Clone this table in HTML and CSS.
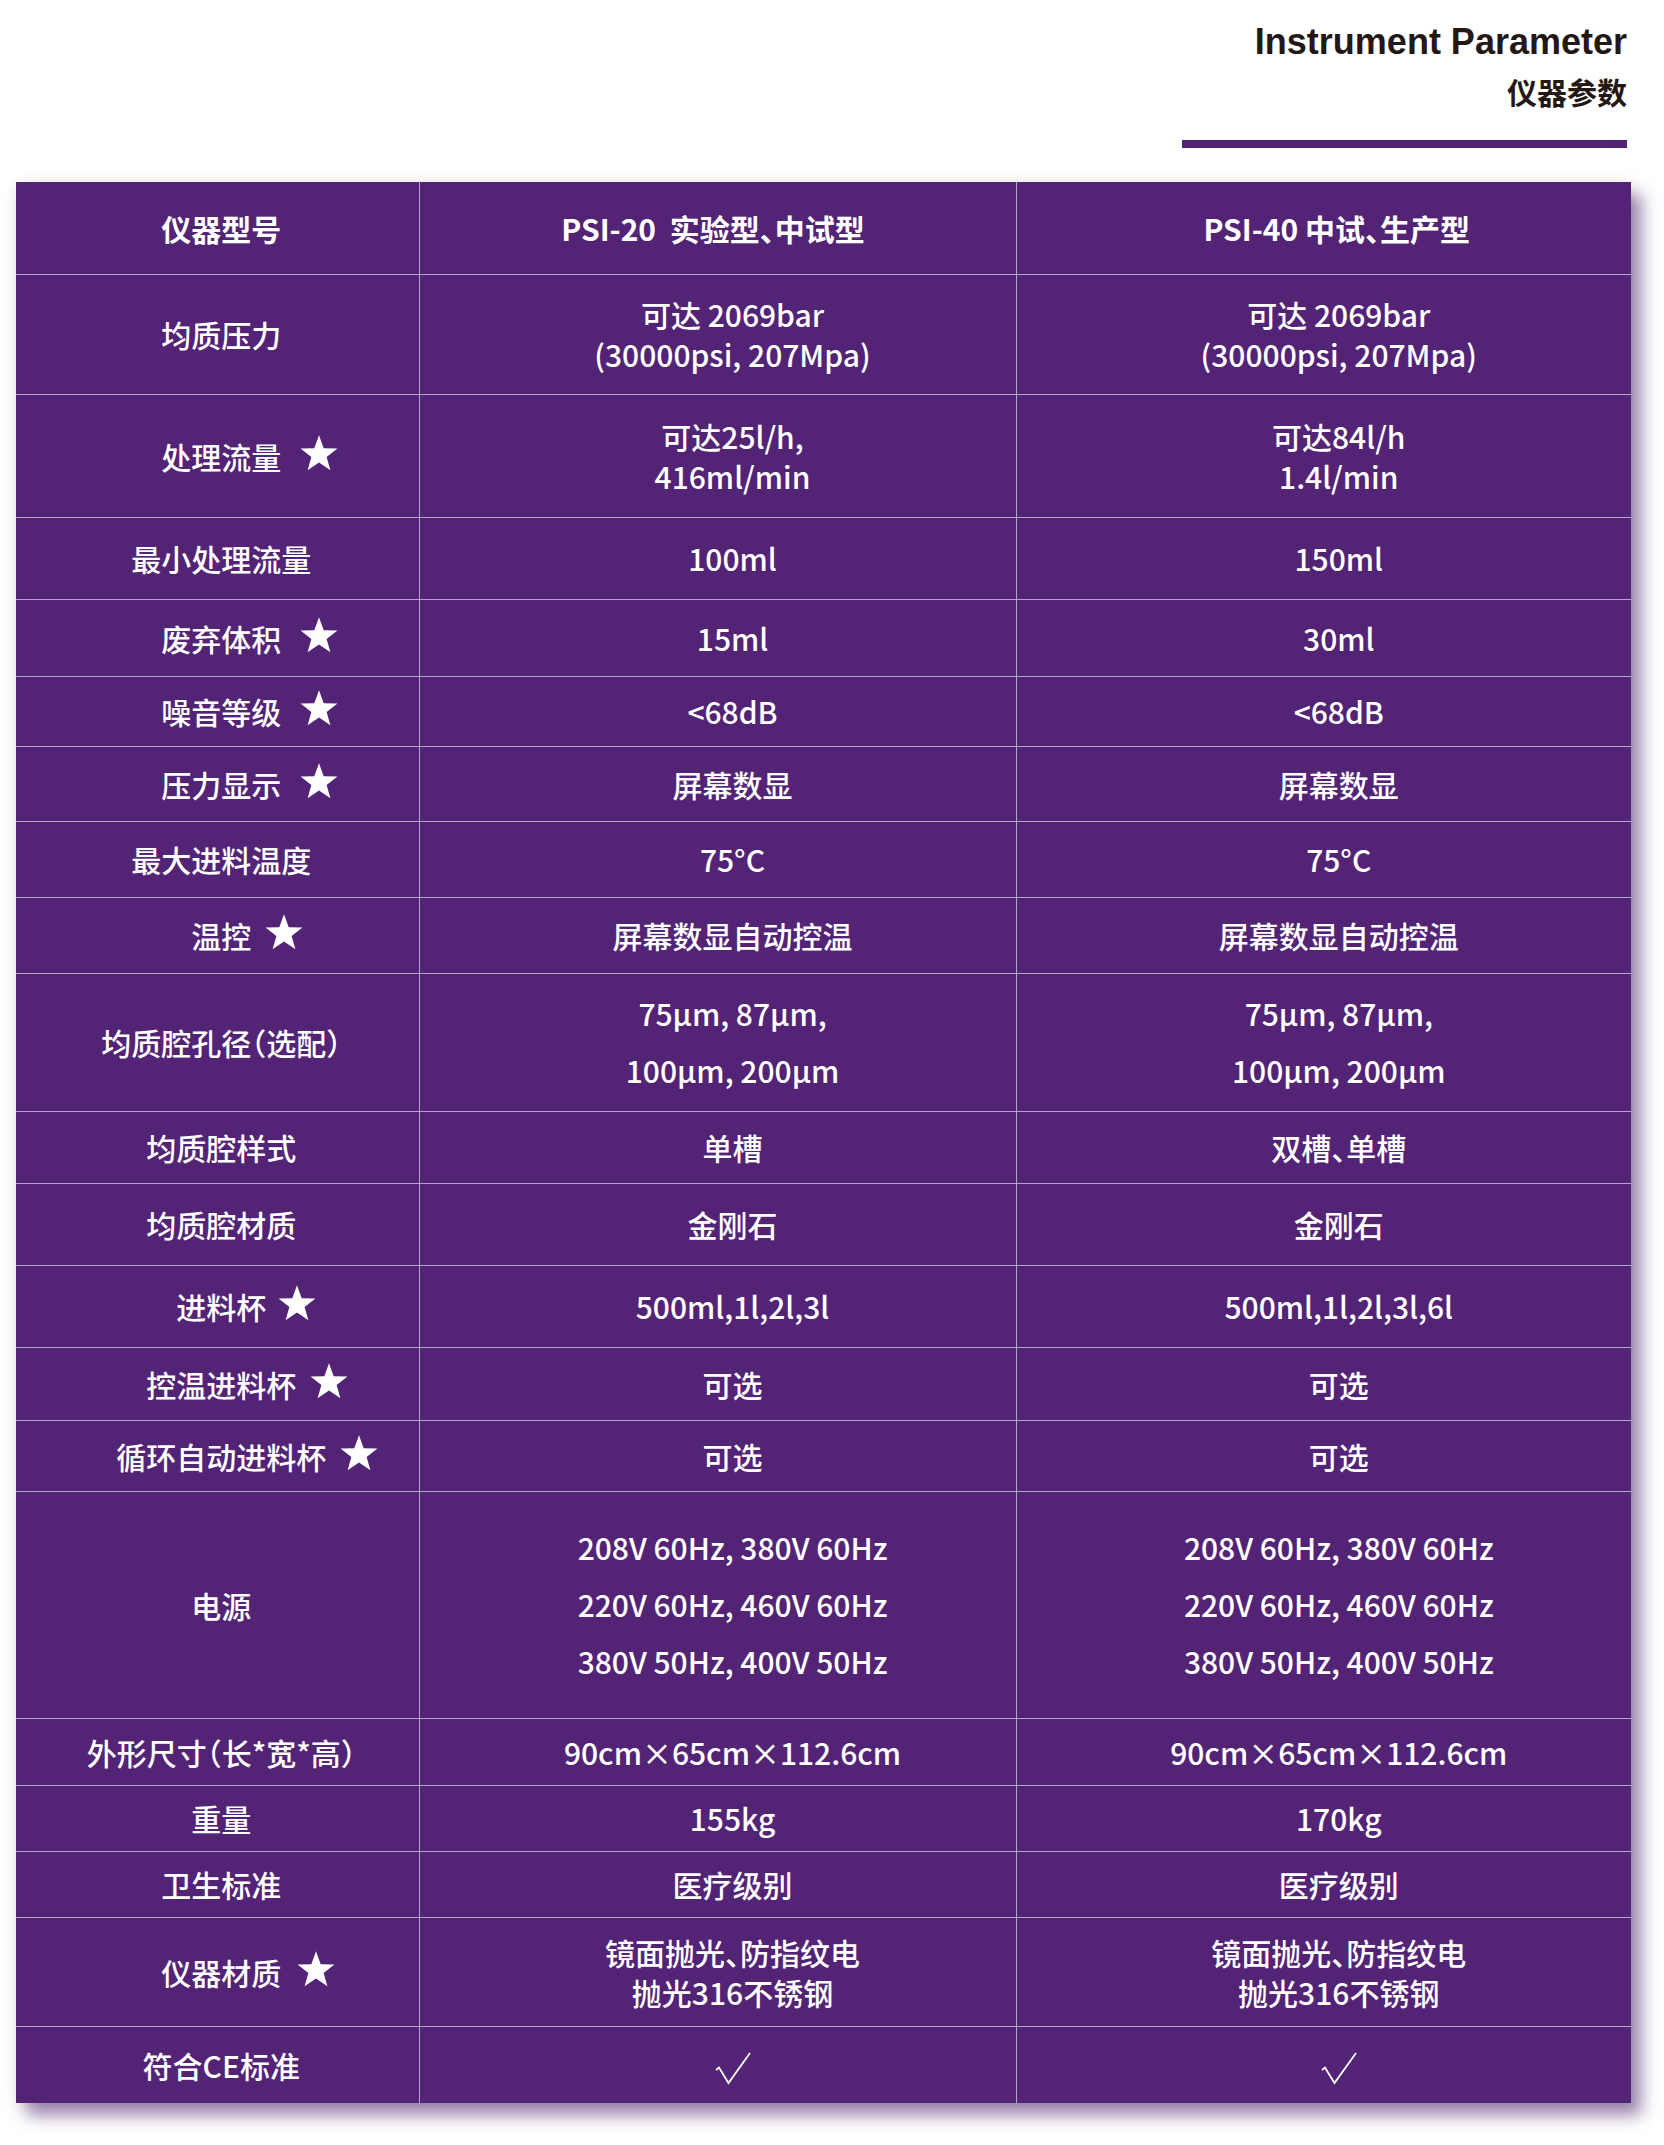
FILE: index.html
```html
<!DOCTYPE html>
<html lang="zh-CN">
<head>
<meta charset="utf-8">
<title>Instrument Parameter 仪器参数</title>
<link rel="stylesheet" href="styles.css">
</head>
<body>
<div class="page">
  <header class="title">
    <h1 class="title-en">Instrument Parameter</h1>
    <h2 class="title-cn">仪器参数</h2>
    <div class="title-rule"></div>
  </header>

  <table class="spec">
    <colgroup>
      <col class="c1"><col class="c2"><col class="c3">
    </colgroup>
    <thead>
      <tr class="h92">
        <th>仪器型号</th>
        <th class="mid half">PSI-20&nbsp; 实验型、中试型</th>
        <th class="val half">PSI-40 中试、生产型</th>
      </tr>
    </thead>
    <tbody>
      <tr class="h120">
        <td class="lab">均质压力</td>
        <td class="val">可达 2069bar<br>(30000psi, 207Mpa)</td>
        <td class="val">可达 2069bar<br>(30000psi, 207Mpa)</td>
      </tr>
      <tr class="h123">
        <td class="lab"><span class="star-wrap">处理流量<svg class="star" viewBox="0 0 38 36"><path d="M19 0.2 L23.7 13.13 L37.45 13.6 L26.61 22.07 L30.4 35.3 L19 27.6 L7.6 35.3 L11.39 22.07 L0.55 13.6 L14.3 13.13 Z"/></svg></span></td>
        <td class="val">可达25l/h,<br>416ml/min</td>
        <td class="val">可达84l/h<br>1.4l/min</td>
      </tr>
      <tr class="h82">
        <td class="lab">最小处理流量</td>
        <td class="val">100ml</td>
        <td class="val">150ml</td>
      </tr>
      <tr class="h77">
        <td class="lab"><span class="star-wrap">废弃体积<svg class="star" viewBox="0 0 38 36"><path d="M19 0.2 L23.7 13.13 L37.45 13.6 L26.61 22.07 L30.4 35.3 L19 27.6 L7.6 35.3 L11.39 22.07 L0.55 13.6 L14.3 13.13 Z"/></svg></span></td>
        <td class="val">15ml</td>
        <td class="val">30ml</td>
      </tr>
      <tr class="h70">
        <td class="lab"><span class="star-wrap">噪音等级<svg class="star" viewBox="0 0 38 36"><path d="M19 0.2 L23.7 13.13 L37.45 13.6 L26.61 22.07 L30.4 35.3 L19 27.6 L7.6 35.3 L11.39 22.07 L0.55 13.6 L14.3 13.13 Z"/></svg></span></td>
        <td class="val">&lt;68dB</td>
        <td class="val">&lt;68dB</td>
      </tr>
      <tr class="h75">
        <td class="lab"><span class="star-wrap">压力显示<svg class="star" viewBox="0 0 38 36"><path d="M19 0.2 L23.7 13.13 L37.45 13.6 L26.61 22.07 L30.4 35.3 L19 27.6 L7.6 35.3 L11.39 22.07 L0.55 13.6 L14.3 13.13 Z"/></svg></span></td>
        <td class="val">屏幕数显</td>
        <td class="val">屏幕数显</td>
      </tr>
      <tr class="h76">
        <td class="lab">最大进料温度</td>
        <td class="val">75°C</td>
        <td class="val">75°C</td>
      </tr>
      <tr class="h76">
        <td class="lab"><span class="star-wrap g14">温控<svg class="star" viewBox="0 0 38 36"><path d="M19 0.2 L23.7 13.13 L37.45 13.6 L26.61 22.07 L30.4 35.3 L19 27.6 L7.6 35.3 L11.39 22.07 L0.55 13.6 L14.3 13.13 Z"/></svg></span></td>
        <td class="val">屏幕数显自动控温</td>
        <td class="val">屏幕数显自动控温</td>
      </tr>
      <tr class="h138">
        <td class="lab half">均质腔孔径（选配）</td>
        <td class="val wide">75µm, 87µm,<br>100µm, 200µm</td>
        <td class="val wide">75µm, 87µm,<br>100µm, 200µm</td>
      </tr>
      <tr class="h72">
        <td class="lab">均质腔样式</td>
        <td class="val">单槽</td>
        <td class="val half">双槽、单槽</td>
      </tr>
      <tr class="h82">
        <td class="lab">均质腔材质</td>
        <td class="val">金刚石</td>
        <td class="val">金刚石</td>
      </tr>
      <tr class="h82">
        <td class="lab"><span class="star-wrap g12">进料杯<svg class="star" viewBox="0 0 38 36"><path d="M19 0.2 L23.7 13.13 L37.45 13.6 L26.61 22.07 L30.4 35.3 L19 27.6 L7.6 35.3 L11.39 22.07 L0.55 13.6 L14.3 13.13 Z"/></svg></span></td>
        <td class="val">500ml,1l,2l,3l</td>
        <td class="val">500ml,1l,2l,3l,6l</td>
      </tr>
      <tr class="h73">
        <td class="lab"><span class="star-wrap g14">控温进料杯<svg class="star" viewBox="0 0 38 36"><path d="M19 0.2 L23.7 13.13 L37.45 13.6 L26.61 22.07 L30.4 35.3 L19 27.6 L7.6 35.3 L11.39 22.07 L0.55 13.6 L14.3 13.13 Z"/></svg></span></td>
        <td class="val">可选</td>
        <td class="val">可选</td>
      </tr>
      <tr class="h71">
        <td class="lab"><span class="star-wrap g14">循环自动进料杯<svg class="star" viewBox="0 0 38 36"><path d="M19 0.2 L23.7 13.13 L37.45 13.6 L26.61 22.07 L30.4 35.3 L19 27.6 L7.6 35.3 L11.39 22.07 L0.55 13.6 L14.3 13.13 Z"/></svg></span></td>
        <td class="val">可选</td>
        <td class="val">可选</td>
      </tr>
      <tr class="h227">
        <td class="lab">电源</td>
        <td class="val wide">208V 60Hz, 380V 60Hz<br>220V 60Hz, 460V 60Hz<br>380V 50Hz, 400V 50Hz</td>
        <td class="val wide">208V 60Hz, 380V 60Hz<br>220V 60Hz, 460V 60Hz<br>380V 50Hz, 400V 50Hz</td>
      </tr>
      <tr class="h67">
        <td class="lab half">外形尺寸（长*宽*高）</td>
        <td class="val">90cm×65cm×112.6cm</td>
        <td class="val">90cm×65cm×112.6cm</td>
      </tr>
      <tr class="h66">
        <td class="lab">重量</td>
        <td class="val">155kg</td>
        <td class="val">170kg</td>
      </tr>
      <tr class="h66">
        <td class="lab">卫生标准</td>
        <td class="val">医疗级别</td>
        <td class="val">医疗级别</td>
      </tr>
      <tr class="h109">
        <td class="lab"><span class="star-wrap g16">仪器材质<svg class="star" viewBox="0 0 38 36"><path d="M19 0.2 L23.7 13.13 L37.45 13.6 L26.61 22.07 L30.4 35.3 L19 27.6 L7.6 35.3 L11.39 22.07 L0.55 13.6 L14.3 13.13 Z"/></svg></span></td>
        <td class="val half">镜面抛光、防指纹电<br>抛光316不锈钢</td>
        <td class="val half">镜面抛光、防指纹电<br>抛光316不锈钢</td>
      </tr>
      <tr class="h77">
        <td class="lab">符合CE标准</td>
        <td class="val"><svg class="check" viewBox="0 0 36 33" aria-label="√"><polyline points="1,18 4,15.5 13.5,31 35,1"/></svg></td>
        <td class="val"><svg class="check" viewBox="0 0 36 33" aria-label="√"><polyline points="1,18 4,15.5 13.5,31 35,1"/></svg></td>
      </tr>
    </tbody>
  </table>
</div>
</body>
</html>
```

FILE: styles.css
```css
html, body {
  margin: 0;
  padding: 0;
  background: #ffffff;
}

.page {
  width: 1664px;
  padding: 0 33px 40px 16px;
  box-sizing: border-box;
}

.title {
  display: flex;
  flex-direction: column;
  align-items: flex-end;
  padding-right: 4px;
  padding-top: 22px;
}

.title-en {
  margin: 0;
  font-family: "Liberation Sans", Arial, sans-serif;
  font-weight: 700;
  font-size: 36px;
  line-height: 40px;
  color: #231815;
}

.title-cn {
  margin: 0;
  margin-top: 12px;
  font-family: "Noto Sans CJK SC", sans-serif;
  font-weight: 700;
  font-size: 30px;
  line-height: 34px;
  color: #231815;
}

.title-rule {
  width: 445px;
  height: 8px;
  margin-top: 32px;
  background: #532476;
}

.spec {
  margin-top: 34px;
  width: 1615px;
  border-collapse: collapse;
  table-layout: fixed;
  background: #532476;
  color: #ffffff;
  font-family: "Noto Sans CJK SC", sans-serif;
  font-size: 30px;
  font-weight: 500;
  box-shadow: 10px 12px 16px rgba(70, 30, 100, 0.55), 0 0 14px rgba(0, 0, 0, 0.06);
}

.spec col.c1 { width: 403px; }
.spec col.c2 { width: 597px; }
.spec col.c3 { width: 615px; }

.spec th,
.spec td {
  border: 1px solid #b7a5c8;
  text-align: center;
  vertical-align: middle;
  padding: 0;
  line-height: 40px;
}

.spec tr:first-child th { border-top: none; }
.spec tr:last-child td { border-bottom: none; }
.spec th:first-child, .spec td:first-child { border-left: none; }
.spec th:last-child, .spec td:last-child { border-right: none; }

.spec th {
  font-weight: 700;
  padding-left: 8px;
}

.spec th.mid { padding: 0 9px 0 0; }
.spec th.val { padding-left: 26px; }

.spec td.lab { padding-left: 8px; }
.spec td.val { padding-left: 30px; }
.spec td.wide { line-height: 57px; }

.half { font-feature-settings: "halt"; }

.star-wrap {
  position: relative;
  display: inline-block;
}

.star {
  position: absolute;
  left: calc(100% + 19px);
  top: -1px;
  width: 38px;
  height: 36px;
  fill: #ffffff;
}

.star-wrap.g16 .star { left: calc(100% + 16px); }
.star-wrap.g14 .star { left: calc(100% + 14px); }
.star-wrap.g12 .star { left: calc(100% + 12px); }

.check {
  display: inline-block;
  vertical-align: middle;
  width: 36px;
  height: 33px;
  fill: none;
  stroke: #ffffff;
  stroke-width: 1.8;
  stroke-linejoin: miter;
}

.h66 { height: 66px; }
.h67 { height: 67px; }
.h70 { height: 70px; }
.h71 { height: 71px; }
.h72 { height: 72px; }
.h73 { height: 73px; }
.h75 { height: 75px; }
.h76 { height: 76px; }
.h77 { height: 77px; }
.h82 { height: 82px; }
.h92 { height: 92px; }
.h109 { height: 109px; }
.h120 { height: 120px; }
.h123 { height: 123px; }
.h138 { height: 138px; }
.h227 { height: 227px; }
```
